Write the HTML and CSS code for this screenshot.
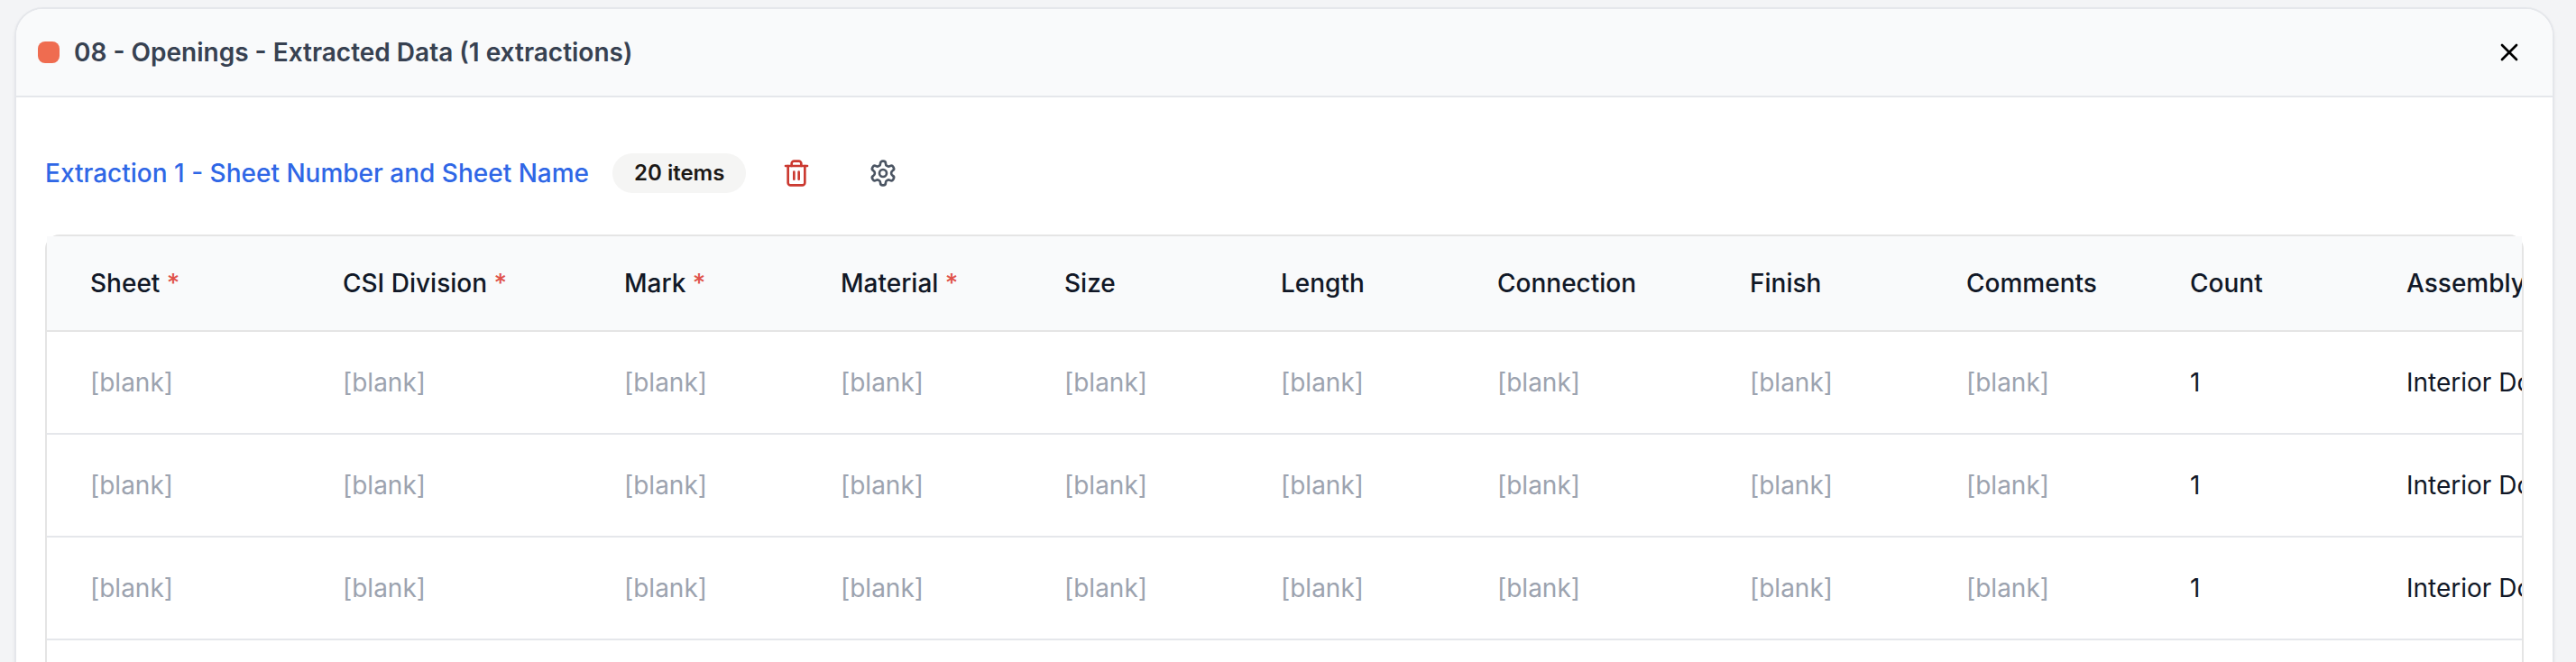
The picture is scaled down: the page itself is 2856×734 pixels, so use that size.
FILE: index.html
```html
<!DOCTYPE html>
<html lang="en">
<head>
<meta charset="utf-8">
<title>08 - Openings - Extracted Data</title>
<link rel="stylesheet" href="styles.css">
</head>
<body>
<main class="page">
  <section class="card">
    <header class="card-header">
      <span class="swatch"></span>
      <h1 class="card-title">08 - Openings - Extracted Data (1 extractions)</h1>
      <button class="icon-button" type="button" aria-label="Close">
        <svg class="icon" viewBox="0 0 24 24"><path d="M18 6 6 18"/><path d="m6 6 12 12"/></svg>
      </button>
    </header>
    <div class="card-body">
      <div class="toolbar">
        <a class="extraction-link" href="#extraction-1">Extraction 1 - Sheet Number and Sheet Name</a>
        <span class="badge">20 items</span>
        <div class="actions">
          <button class="icon-button delete" type="button" aria-label="Delete extraction">
            <svg class="icon" viewBox="0 0 24 24"><path d="M3 6h18"/><path d="M19 6v14c0 1-1 2-2 2H7c-1 0-2-1-2-2V6"/><path d="M8 6V4c0-1 1-2 2-2h4c1 0 2 1 2 2v2"/><path d="M10 11v6"/><path d="M14 11v6"/></svg>
          </button>
          <button class="icon-button settings" type="button" aria-label="Extraction settings">
            <svg class="icon" viewBox="0 0 24 24"><path d="M12.22 2h-.44a2 2 0 0 0-2 2v.18a2 2 0 0 1-1 1.73l-.43.25a2 2 0 0 1-2 0l-.15-.08a2 2 0 0 0-2.73.73l-.22.38a2 2 0 0 0 .73 2.73l.15.1a2 2 0 0 1 1 1.72v.51a2 2 0 0 1-1 1.74l-.15.09a2 2 0 0 0-.73 2.73l.22.38a2 2 0 0 0 2.73.73l.15-.08a2 2 0 0 1 2 0l.43.25a2 2 0 0 1 1 1.73V20a2 2 0 0 0 2 2h.44a2 2 0 0 0 2-2v-.18a2 2 0 0 1 1-1.73l.43-.25a2 2 0 0 1 2 0l.15.08a2 2 0 0 0 2.73-.73l.22-.39a2 2 0 0 0-.73-2.73l-.15-.08a2 2 0 0 1-1-1.74v-.5a2 2 0 0 1 1-1.74l.15-.09a2 2 0 0 0 .73-2.73l-.22-.38a2 2 0 0 0-2.73-.73l-.15.08a2 2 0 0 1-2 0l-.43-.25a2 2 0 0 1-1-1.73V4a2 2 0 0 0-2-2z"/><circle cx="12" cy="12" r="3"/></svg>
          </button>
        </div>
      </div>
      <div class="table-frame">
        <div class="table-scroll">
          <table class="data-table">
            <colgroup>
              <col class="col-md"><col class="col-lg"><col class="col-sm"><col class="col-count"><col class="col-sm"><col class="col-sm"><col class="col-md"><col class="col-sm"><col class="col-count"><col class="col-sm"><col class="col-lg">
            </colgroup>
            <thead>
              <tr><th>Sheet <span class="required">*</span></th><th>CSI Division <span class="required">*</span></th><th>Mark <span class="required">*</span></th><th>Material <span class="required">*</span></th><th>Size</th><th>Length</th><th>Connection</th><th>Finish</th><th>Comments</th><th>Count</th><th>Assembly</th></tr>
            </thead>
            <tbody>
              <tr><td class="blank">[blank]</td><td class="blank">[blank]</td><td class="blank">[blank]</td><td class="blank">[blank]</td><td class="blank">[blank]</td><td class="blank">[blank]</td><td class="blank">[blank]</td><td class="blank">[blank]</td><td class="blank">[blank]</td><td>1</td><td>Interior Door</td></tr>
              <tr><td class="blank">[blank]</td><td class="blank">[blank]</td><td class="blank">[blank]</td><td class="blank">[blank]</td><td class="blank">[blank]</td><td class="blank">[blank]</td><td class="blank">[blank]</td><td class="blank">[blank]</td><td class="blank">[blank]</td><td>1</td><td>Interior Door</td></tr>
              <tr><td class="blank">[blank]</td><td class="blank">[blank]</td><td class="blank">[blank]</td><td class="blank">[blank]</td><td class="blank">[blank]</td><td class="blank">[blank]</td><td class="blank">[blank]</td><td class="blank">[blank]</td><td class="blank">[blank]</td><td>1</td><td>Interior Door</td></tr>
              <tr><td></td><td></td><td></td><td></td><td></td><td></td><td></td><td></td><td></td><td></td><td></td></tr>
            </tbody>
          </table>
        </div>
      </div>
    </div>
  </section>
</main>
</body>
</html>
```

FILE: styles.css
```css
* {
  box-sizing: border-box;
}

body {
  margin: 0;
  background: #f3f4f6;
  color: #111827;
  font-family: Inter, "Liberation Sans", sans-serif;
  font-size: 28px;
  line-height: 40px;
}

.page {
  height: 100vh;
  padding: 8px 24px 0 16px;
  overflow: hidden;
}

.card {
  border: 2px solid #e5e7eb;
  border-radius: 32px;
  background: #ffffff;
  box-shadow: 0 2px 4px rgba(0, 0, 0, 0.05);
  overflow: hidden;
}

.card-header {
  display: flex;
  align-items: center;
  gap: 16px;
  padding: 24px;
  border-bottom: 2px solid #e5e7eb;
  background: #f9fafb;
}

.swatch {
  width: 24px;
  height: 24px;
  border-radius: 8px;
  background: #ef6c50;
}

.card-title {
  flex: 1;
  margin: 0;
  color: #374151;
  font-size: 28px;
  font-weight: 600;
}

.icon-button {
  display: flex;
  align-items: center;
  justify-content: center;
  width: 48px;
  height: 48px;
  padding: 0;
  border: 0;
  background: transparent;
  color: #000000;
}

.icon {
  width: 32px;
  height: 32px;
  fill: none;
  stroke: currentColor;
  stroke-width: 2;
  stroke-linecap: round;
  stroke-linejoin: round;
}

.card-body {
  padding: 56px 32px;
}

.toolbar {
  display: flex;
  align-items: center;
  gap: 26px;
  height: 56px;
  margin-bottom: 40px;
}

.extraction-link {
  color: #2f67e6;
  font-weight: 500;
  text-decoration: none;
}

.badge {
  padding: 6px 24px;
  border-radius: 22px;
  background: #f5f5f4;
  color: #1c1917;
  font-size: 24px;
  font-weight: 600;
  line-height: 32px;
}

.actions {
  display: flex;
  gap: 48px;
  padding-left: 6px;
}

.delete {
  color: #cb3a31;
}

.settings {
  color: #4b5563;
}

.table-frame {
  border: 2px solid #e5e5e5;
  border-radius: 16px;
}

.table-scroll {
  overflow: hidden;
}

.data-table {
  width: 2880px;
  table-layout: fixed;
  border-collapse: separate;
  border-spacing: 0;
}

.col-sm {
  width: 240px;
}

.col-count {
  width: 248px;
}

.col-md {
  width: 280px;
}

.col-lg {
  width: 312px;
}

.data-table th,
.data-table td {
  padding: 0 0 0 48px;
  text-align: left;
  white-space: nowrap;
}

.data-table th {
  height: 106px;
  border-bottom: 2px solid #e5e5e5;
  background: #f9fafb;
  font-weight: 500;
}

.data-table td {
  height: 114px;
  border-bottom: 2px solid #e5e7eb;
}

.data-table .blank {
  color: #9ca3af;
}

.required {
  color: #e0524a;
}
```
